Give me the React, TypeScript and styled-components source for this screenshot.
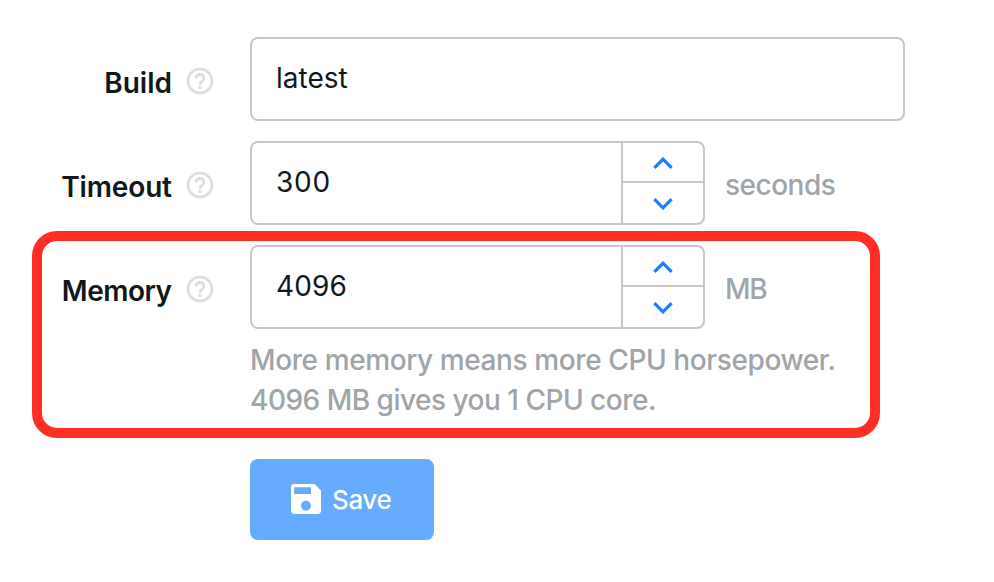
import React from "react";
import styled, { createGlobalStyle } from "styled-components";

const GlobalStyle = createGlobalStyle`
  * { box-sizing: border-box; }
  body {
    margin: 0;
    background: #ffffff;
    color: #10181c;
    font-family: Inter, "Liberation Sans", sans-serif;
    -webkit-font-smoothing: antialiased;
  }
`;

const Page = styled.main`
  width: 994px;
  height: 582px;
  padding-top: 37px;
  overflow: hidden;
`;

const Form = styled.form`
  display: flex;
  flex-direction: column;
  gap: 20px;
`;

const FormRow = styled.div`
  position: relative;
  display: grid;
  grid-template-columns: 216px 1fr;
  column-gap: 34px;
`;

const LabelCell = styled.div`
  display: flex;
  align-items: center;
  justify-content: flex-end;
  gap: 12px;
  height: 88px;
  margin-bottom: -4px;
`;

const Label = styled.label<{ $spacing: number }>`
  padding-top: 3px;
  font-size: 28px;
  font-weight: 600;
  line-height: 40px;
  letter-spacing: ${(p) => p.$spacing}px;
  margin-right: ${(p) => -p.$spacing}px;
  white-space: nowrap;
`;

const HelpSvg = styled.svg`
  display: block;
  width: 32px;
  height: 32px;
  fill: #dcdcdc;
`;

const Controls = styled.div`
  display: flex;
  align-items: center;
  height: 84px;
`;

const Field = styled.div<{ $width: number }>`
  display: flex;
  width: ${(p) => p.$width}px;
  height: 84px;
  border: 2px solid #c8c8c8;
  border-radius: 8px;
  background: #ffffff;
`;

const Value = styled.div<{ $spacing: number }>`
  flex: 1;
  padding: 19px 0 0 24px;
  font-size: 28px;
  line-height: 40px;
  letter-spacing: ${(p) => p.$spacing}px;
`;

const Stepper = styled.div`
  display: grid;
  grid-template-rows: 40px 40px;
  width: 82px;
  border-left: 2px solid #c8c8c8;
`;

const Step = styled.button`
  display: flex;
  align-items: center;
  justify-content: center;
  padding: 1px 0 0;
  border: 0;
  background: none;
  color: #1680ff;

  &:first-child {
    border-bottom: 2px solid #c8c8c8;
  }
`;

const ChevronSvg = styled.svg`
  display: block;
  width: 20px;
  height: 12px;
  fill: none;
  stroke: currentColor;
  stroke-width: 3.2;
`;

const Unit = styled.span<{ $spacing: number }>`
  margin-left: 20px;
  padding-top: 3px;
  color: #9fa5a8;
  font-size: 28px;
  font-weight: 450;
  line-height: 40px;
  letter-spacing: ${(p) => p.$spacing}px;
`;

const Hint = styled.p`
  grid-column: 2;
  margin: 11px 0 0;
  color: #9fa5a8;
  font-size: 28px;
  font-weight: 450;
  line-height: 40px;
`;

const HintLine = styled.span<{ $spacing: number }>`
  display: block;
  white-space: nowrap;
  letter-spacing: ${(p) => p.$spacing}px;
`;

const Highlight = styled.div`
  position: absolute;
  top: -14px;
  left: 32px;
  width: 848px;
  height: 207px;
  border: 10px solid #ff2e24;
  border-radius: 25px;
  pointer-events: none;
`;

const SaveButton = styled.button`
  display: flex;
  align-items: center;
  gap: 11px;
  width: 184px;
  height: 81px;
  margin: 19px 0 0 250px;
  padding: 0 0 0 41px;
  border: 0;
  border-radius: 8px;
  background: #66abff;
  color: #ffffff;
  font-family: inherit;
  font-size: 26px;
  font-weight: 500;
  line-height: 40px;
`;

const SaveLabel = styled.span`
  padding-top: 1px;
  letter-spacing: -0.4px;
`;

const SaveSvg = styled.svg`
  display: block;
  flex: none;
  width: 30px;
  height: 30px;
  margin-bottom: 1px;
`;

const HelpIcon = () => (
  <HelpSvg viewBox="0 0 24 24" aria-hidden="true">
    <path d="M11 18h2v-2h-2v2zm1-16C6.48 2 2 6.48 2 12s4.48 10 10 10 10-4.48 10-10S17.52 2 12 2zm0 18c-4.41 0-8-3.59-8-8s3.59-8 8-8 8 3.59 8 8-3.59 8-8 8zm0-14c-2.21 0-4 1.79-4 4h2c0-1.1.9-2 2-2s2 .9 2 2c0 2-3 1.75-3 5h2c0-2.25 3-2.5 3-5 0-2.21-1.79-4-4-4z" />
  </HelpSvg>
);

const Chevron = ({ up }: { up?: boolean }) => (
  <ChevronSvg viewBox="0 0 20 12" aria-hidden="true">
    <path d={up ? "M1.4 10.8 10 2.2l8.6 8.6" : "M1.4 1.2 10 9.8l8.6-8.6"} />
  </ChevronSvg>
);

const SaveIcon = () => (
  <SaveSvg viewBox="0 0 30 30" aria-hidden="true">
    <path
      fill="#fff"
      fillRule="evenodd"
      d="M23.5 0H3.4A3.4 3.4 0 0 0 0 3.4v23.2A3.4 3.4 0 0 0 3.4 30h23.2a3.4 3.4 0 0 0 3.4-3.4V6.5zM3.2 3.3H20v6.6H3.2zM15 16.7a5 5 0 1 1 0 10 5 5 0 0 1 0-10z"
    />
  </SaveSvg>
);

type RowLabelProps = { text: string; spacing: number };

const RowLabel = ({ text, spacing }: RowLabelProps) => (
  <LabelCell>
    <Label $spacing={spacing}>{text}</Label>
    <HelpIcon />
  </LabelCell>
);

type NumberFieldProps = {
  value: string;
  valueSpacing: number;
  unit: string;
  unitSpacing: number;
};

const NumberField = ({ value, valueSpacing, unit, unitSpacing }: NumberFieldProps) => (
  <Controls>
    <Field $width={455}>
      <Value $spacing={valueSpacing}>{value}</Value>
      <Stepper>
        <Step type="button" aria-label="Increase">
          <Chevron up />
        </Step>
        <Step type="button" aria-label="Decrease">
          <Chevron />
        </Step>
      </Stepper>
    </Field>
    <Unit $spacing={unitSpacing}>{unit}</Unit>
  </Controls>
);

export default function App() {
  return (
    <Page>
      <GlobalStyle />
      <Form>
        <FormRow>
          <RowLabel text="Build" spacing={0} />
          <Controls>
            <Field $width={655}>
              <Value $spacing={0}>latest</Value>
            </Field>
          </Controls>
        </FormRow>
        <FormRow>
          <RowLabel text="Timeout" spacing={-0.15} />
          <NumberField value="300" valueSpacing={0.8} unit="seconds" unitSpacing={-0.5} />
        </FormRow>
        <FormRow>
          <RowLabel text="Memory" spacing={-0.5} />
          <NumberField value="4096" valueSpacing={0.1} unit="MB" unitSpacing={-1.2} />
          <Hint>
            <HintLine $spacing={-0.4}>More memory means more CPU horsepower.</HintLine>
            <HintLine $spacing={-0.5}>4096 MB gives you 1 CPU core.</HintLine>
          </Hint>
          <Highlight />
        </FormRow>
        <SaveButton type="button">
          <SaveIcon />
          <SaveLabel>Save</SaveLabel>
        </SaveButton>
      </Form>
    </Page>
  );
}
